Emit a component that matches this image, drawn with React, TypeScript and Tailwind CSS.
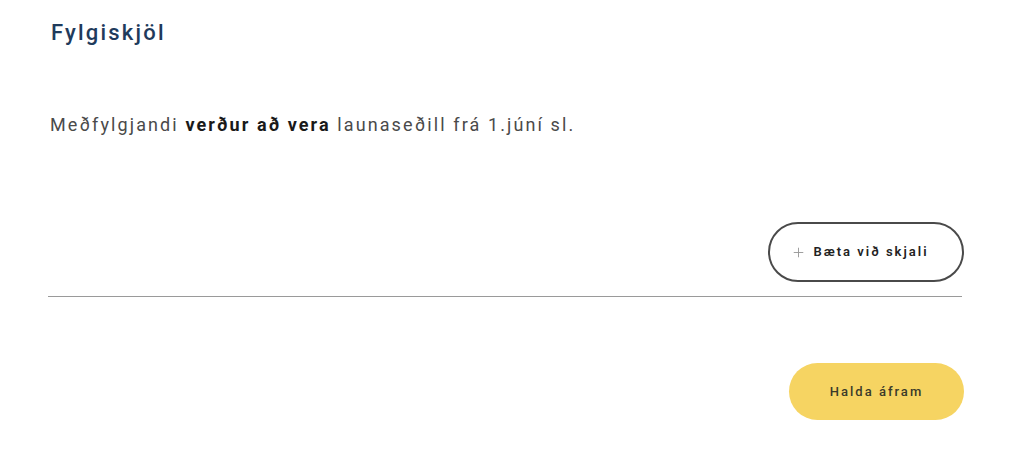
import { Plus } from "lucide-react";

export default function App() {
  return (
    <div
      className="min-h-[455px] w-[1024px] bg-white pl-[48px] pr-[60px] pt-[18px]"
      style={{ fontFamily: "Roboto, 'Noto Sans', sans-serif" }}
    >
      <h2 className="pl-[3px] text-[22px] font-medium leading-[30px] tracking-[2.2px] text-[#1f3b5c]">Fylgiskjöl</h2>

      <p className="mt-[65px] pl-[2px] text-[18px] leading-[24px] tracking-[2.1px] text-[#4a4a4a]">
        Meðfylgjandi <strong className="font-bold text-[#1a1a1a]">verður að vera</strong> launaseðill frá 1.júní sl.
      </p>

      <div className="mt-[85px] flex justify-end">
        <button className="flex h-[60px] w-[196px] items-center justify-center gap-[7px] rounded-full border-2 border-[#4a4a4a] bg-white pr-[12px] text-[13px] font-semibold tracking-[2px] text-[#222]">
          <Plus className="h-[15px] w-[15px] text-[#999]" strokeWidth={1.5} />
          Bæta við skjali
        </button>
      </div>

      <hr className="mt-[14px] mr-[2px] border-t border-[#9a9a9a]" />

      <div className="mt-[66px] flex justify-end">
        <button className="h-[57px] w-[175px] rounded-full bg-[#f6d462] text-[13px] font-medium tracking-[2px] text-[#3a3a2a]">
          Halda áfram
        </button>
      </div>
    </div>
  );
}
